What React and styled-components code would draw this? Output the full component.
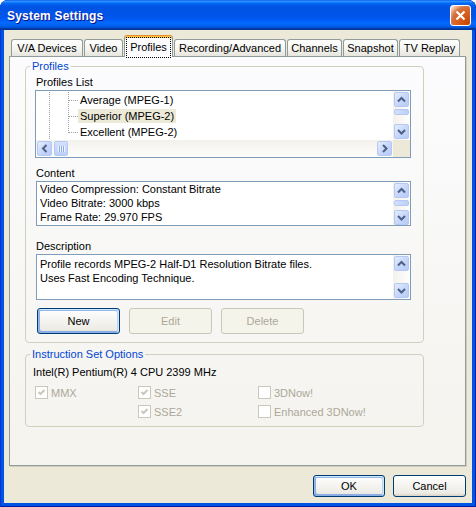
import React from "react";
import styled, { createGlobalStyle } from "styled-components";

const GlobalStyle = createGlobalStyle`
  html, body {
    margin: 0;
    padding: 0;
    background: #ffffff;
  }
  body {
    font-family: "Liberation Sans", Arial, sans-serif;
    font-size: 11px;
    color: #000000;
  }
  * {
    box-sizing: border-box;
  }
`;

const tabs = [
  { label: "V/A Devices", width: 72 },
  { label: "Video", width: 39 },
  { label: "Profiles", width: 49, active: true },
  { label: "Recording/Advanced", width: 112 },
  { label: "Channels", width: 55 },
  { label: "Snapshot", width: 55 },
  { label: "TV Replay", width: 61 },
];

const profiles = [
  { name: "Average (MPEG-1)" },
  { name: "Superior (MPEG-2)", selected: true },
  { name: "Excellent (MPEG-2)", last: true },
];

const arrows = {
  up: "M4 9.5 L7.5 6 L11 9.5",
  down: "M4 6 L7.5 9.5 L11 6",
  left: "M9.5 4 L6 7.5 L9.5 11",
  right: "M6 4 L9.5 7.5 L6 11",
};

const Arrow = ({ dir }) => (
  <svg width="13" height="13" viewBox="1 1 13 13">
    <path d={arrows[dir]} fill="none" stroke="#4D6185" strokeWidth="2" />
  </svg>
);

const Check = () => (
  <svg width="11" height="11" viewBox="0 0 11 11">
    <path d="M2.5 5 L4.5 7 L8.5 3" fill="none" stroke="#CAC8BB" strokeWidth="2" />
  </svg>
);

const App = () => {
  return (
    <>
      <GlobalStyle />
      <Window>
        <TitleBar>
          <Title>System Settings</Title>
          <CloseButton>
            <svg width="13" height="13" viewBox="0 0 13 13">
              <path d="M2.5 2.5 L10.5 10.5 M10.5 2.5 L2.5 10.5" stroke="#fff" strokeWidth="2.2" />
            </svg>
          </CloseButton>
        </TitleBar>
        <Body>
          <TabStrip>
            {tabs.map((t) => (
              <Tab key={t.label} $width={t.width} $active={t.active}>
                {t.active ? <FocusRing>{t.label}</FocusRing> : t.label}
              </Tab>
            ))}
          </TabStrip>
          <Panel>
            <Group>
              <Legend>Profiles</Legend>
              <FieldLabel $top={3}>Profiles List</FieldLabel>
              <ListBox>
                <ListTop>
                  <TreeArea>
                    {profiles.map((p) => (
                      <TreeRow key={p.name} $last={p.last}>
                        <TreeText $selected={p.selected}>{p.name}</TreeText>
                      </TreeRow>
                    ))}
                  </TreeArea>
                  <VScroll>
                    <ScrollButton><Arrow dir="up" /></ScrollButton>
                    <VThumb />
                    <Spacer />
                    <ScrollButton><Arrow dir="down" /></ScrollButton>
                  </VScroll>
                </ListTop>
                <ListBottom>
                  <HScroll>
                    <ScrollButton><Arrow dir="left" /></ScrollButton>
                    <HThumb />
                    <Spacer />
                    <ScrollButton><Arrow dir="right" /></ScrollButton>
                  </HScroll>
                  <Corner />
                </ListBottom>
              </ListBox>

              <FieldLabel $top={9}>Content</FieldLabel>
              <TextBox $height={45}>
                <TextBody $pad={0}>
                  <div>Video Compression: Constant Bitrate</div>
                  <div>Video Bitrate: 3000 kbps</div>
                  <div>Frame Rate: 29.970 FPS</div>
                </TextBody>
                <VScroll>
                  <ScrollButton><Arrow dir="up" /></ScrollButton>
                  <VThumb />
                  <Spacer />
                  <ScrollButton><Arrow dir="down" /></ScrollButton>
                </VScroll>
              </TextBox>

              <FieldLabel $top={14}>Description</FieldLabel>
              <TextBox $height={46}>
                <TextBody $pad={2}>
                  <div>Profile records MPEG-2 Half-D1 Resolution Bitrate files.</div>
                  <div>Uses Fast Encoding Technique.</div>
                </TextBody>
                <VScroll>
                  <ScrollButton><Arrow dir="up" /></ScrollButton>
                  <Spacer />
                  <ScrollButton><Arrow dir="down" /></ScrollButton>
                </VScroll>
              </TextBox>

              <ButtonRow>
                <Button $width={83} $height={26} $focused>New</Button>
                <Button $width={83} $height={26} disabled>Edit</Button>
                <Button $width={83} $height={26} disabled>Delete</Button>
              </ButtonRow>
            </Group>

            <Group $top={5}>
              <Legend>Instruction Set Options</Legend>
              <CpuName>Intel(R) Pentium(R) 4 CPU 2399 MHz</CpuName>
              <CheckGrid>
                <CheckItem><CheckBox><Check /></CheckBox>MMX</CheckItem>
                <CheckItem><CheckBox><Check /></CheckBox>SSE</CheckItem>
                <CheckItem><CheckBox />3DNow!</CheckItem>
                <span />
                <CheckItem><CheckBox><Check /></CheckBox>SSE2</CheckItem>
                <CheckItem><CheckBox />Enhanced 3DNow!</CheckItem>
              </CheckGrid>
            </Group>
          </Panel>
          <Footer>
            <Button $width={72} $height={22} $focused>OK</Button>
            <Button $width={73} $height={22}>Cancel</Button>
          </Footer>
        </Body>
      </Window>
    </>
  );
};

export default App;

const Window = styled.div`
  width: 476px;
  height: 507px;
  display: flex;
  flex-direction: column;
  background: #0054e3;
  border-radius: 8px 8px 0 0;
  box-shadow: inset 1px 0 #0831d9, inset -1px 0 #001ea0, inset 0 -1px #001ea0;
  overflow: hidden;
`;

const TitleBar = styled.div`
  height: 30px;
  flex: none;
  display: flex;
  align-items: center;
  justify-content: space-between;
  padding: 0 5px 0 7px;
  border-radius: 8px 8px 0 0;
  background: linear-gradient(
    to bottom,
    #0058ee 0%,
    #3593ff 4%,
    #288eff 6%,
    #127dff 8%,
    #036ffc 10%,
    #0262ee 14%,
    #0057e5 20%,
    #0054e3 24%,
    #0055eb 56%,
    #005bf5 66%,
    #026afe 76%,
    #0062ef 86%,
    #0052d6 92%,
    #0040ab 94%,
    #003092 100%
  );
`;

const Title = styled.span`
  color: #ffffff;
  font-weight: bold;
  font-size: 12px;
  letter-spacing: 0.2px;
  text-shadow: 1px 1px #0f1089;
  padding-top: 2px;
`;

const CloseButton = styled.span`
  width: 21px;
  height: 21px;
  margin-top: 1px;
  display: flex;
  align-items: center;
  justify-content: center;
  border: 1px solid #ffffff;
  border-radius: 3px;
  background: radial-gradient(
    circle at 90% 90%,
    #cc4600 0%,
    #dc6527 55%,
    #cd7546 68%,
    #ffccb2 90%,
    #ffffff 100%
  );
`;

const Body = styled.div`
  flex: 1;
  margin: 0 4px 4px;
  background: #ece9d8;
  padding: 5px 0 0 5px;
  display: flex;
  flex-direction: column;
`;

const TabStrip = styled.div`
  height: 21px;
  display: flex;
  align-items: flex-end;
  gap: 1px;
  padding-left: 2px;
`;

const Tab = styled.div`
  width: ${(p) => p.$width}px;
  height: ${(p) => (p.$active ? 22 : 17)}px;
  margin-bottom: ${(p) => (p.$active ? -1 : 0)}px;
  position: relative;
  z-index: ${(p) => (p.$active ? 1 : 0)};
  display: flex;
  align-items: center;
  justify-content: center;
  white-space: nowrap;
  border: 1px solid #919b9c;
  border-bottom: none;
  border-radius: 3px 3px 0 0;
  background: ${(p) =>
    p.$active
      ? "#fcfcfe"
      : "linear-gradient(to bottom, #ffffff, #f3f3ef 60%, #e6e5dd)"};
  ${(p) =>
    p.$active &&
    `
    border-top: 1px solid #e68b2c;
    box-shadow: inset 0 2px 0 #ffc83c;
    padding-top: 1px;
  `}
`;

const FocusRing = styled.span`
  outline: 1px dotted #000000;
  padding: 3px 3px;
  line-height: 13px;
`;

const Panel = styled.div`
  width: 457px;
  height: 410px;
  border: 1px solid #919b9c;
  box-shadow: 1px 1px 0 #d0cebf;
  background: linear-gradient(to bottom, #fcfcfe, #f4f3ee);
  padding: 3px 0 0 15px;
  display: flex;
  flex-direction: column;
`;

const Group = styled.fieldset`
  width: 399px;
  margin: ${(p) => p.$top || 0}px 0 0 0;
  padding: 0 9px 8px;
  min-width: 0;
  border: 1px solid #d0d0bf;
  border-radius: 4px;
  display: flex;
  flex-direction: column;
  align-items: flex-start;
`;

const Legend = styled.legend`
  color: #0046d5;
  line-height: 13px;
  padding: 0 2px;
  margin-left: -5px;
`;

const FieldLabel = styled.div`
  line-height: 13px;
  margin: ${(p) => p.$top}px 0 1px 1px;
`;

const ListBox = styled.div`
  width: 376px;
  height: 68px;
  border: 1px solid #7f9db9;
  background: #ffffff;
  display: flex;
  flex-direction: column;
`;

const ListTop = styled.div`
  height: 49px;
  display: flex;
`;

const ListBottom = styled.div`
  height: 17px;
  display: flex;
`;

const TreeArea = styled.div`
  flex: 1;
  padding-top: 1px;
  overflow: hidden;
`;

const dots = (dir) =>
  `repeating-linear-gradient(${dir}, #a0a0a0 0 1px, transparent 1px 2px)`;

const TreeRow = styled.div`
  height: 16px;
  display: flex;
  align-items: center;
  padding-left: 42px;
  background-image: ${dots("to bottom")}, ${dots("to bottom")}, ${dots("to right")};
  background-size: 1px 100%, 1px ${(p) => (p.$last ? "9px" : "100%")}, 9px 1px;
  background-position: 13px 0, 32px 0, 33px 8px;
  background-repeat: no-repeat;
`;

const TreeText = styled.span`
  height: 14px;
  line-height: 14px;
  padding: 0 2px;
  white-space: nowrap;
  background: ${(p) => (p.$selected ? "#ece9d8" : "transparent")};
`;

const VScroll = styled.div`
  width: 17px;
  flex: none;
  display: flex;
  flex-direction: column;
  align-items: center;
  padding: 1px 0;
  gap: 2px;
  background: linear-gradient(to right, #f3f1ec, #fefefb);
`;

const HScroll = styled.div`
  flex: 1;
  display: flex;
  align-items: center;
  padding: 0 1px;
  gap: 2px;
  background: linear-gradient(to bottom, #f3f1ec, #fefefb);
`;

const Corner = styled.div`
  width: 17px;
  background: #ece9d8;
`;

const Spacer = styled.div`
  flex: 1;
`;

const ScrollButton = styled.div`
  width: 15px;
  height: 15px;
  flex: none;
  display: flex;
  align-items: center;
  justify-content: center;
  border: 1px solid #b4c8f6;
  border-radius: 2px;
  background: linear-gradient(135deg, #e6eefc 0%, #c8d7fb 50%, #b6cbf7 100%);
`;

const VThumb = styled.div`
  width: 15px;
  height: 6px;
  flex: none;
  border: 1px solid #b4c8f6;
  border-radius: 2px;
  background: linear-gradient(to right, #d4e0fd, #bccff8);
`;

const HThumb = styled.div`
  width: 14px;
  height: 15px;
  flex: none;
  border: 1px solid #b4c8f6;
  border-radius: 2px;
  background: repeating-linear-gradient(to right, #eef3fe 0 1px, #8eaaea 1px 2px) 3px 4px / 7px 6px no-repeat,
    linear-gradient(to bottom, #d4e0fd, #bccff8);
`;

const TextBox = styled.div`
  width: 375px;
  height: ${(p) => p.$height}px;
  margin-left: 1px;
  border: 1px solid #7f9db9;
  background: #ffffff;
  display: flex;
`;

const TextBody = styled.div`
  flex: 1;
  padding: ${(p) => p.$pad}px 3px 0;
  line-height: 14px;
  white-space: nowrap;
  overflow: hidden;
`;

const ButtonRow = styled.div`
  display: flex;
  gap: 9px;
  margin: 8px 0 0 2px;
`;

const Button = styled.button`
  width: ${(p) => p.$width}px;
  height: ${(p) => p.$height}px;
  font: inherit;
  color: #000000;
  padding: 0;
  border: 1px solid #003c74;
  border-radius: 3px;
  background: linear-gradient(to bottom, #ffffff, #ecebe5 86%, #d8d0c4);
  ${(p) =>
    p.$focused &&
    `
    box-shadow: inset -1px 1px #cee7ff, inset 1px 2px #98b8ea, inset -2px 2px #bcd4f6,
      inset 1px -1px #89ade4, inset 2px -2px #89ade4;
  `}
  &:disabled {
    color: #aca899;
    border-color: #c9c7ba;
    background: #f5f4ea;
    box-shadow: none;
  }
`;

const CpuName = styled.div`
  line-height: 13px;
  margin: 5px 0 0 -2px;
`;

const CheckGrid = styled.div`
  display: grid;
  grid-template-columns: 103px 120px 1fr;
  row-gap: 6px;
  margin-top: 7px;
`;

const CheckItem = styled.div`
  display: flex;
  align-items: center;
  gap: 3px;
  height: 13px;
  color: #aca899;
  white-space: nowrap;
`;

const CheckBox = styled.span`
  width: 13px;
  height: 13px;
  flex: none;
  display: inline-flex;
  align-items: center;
  justify-content: center;
  border: 1px solid #cac8bb;
  background: #ffffff;
`;

const Footer = styled.div`
  width: 457px;
  display: flex;
  justify-content: flex-end;
  gap: 8px;
  margin-top: 9px;
`;
